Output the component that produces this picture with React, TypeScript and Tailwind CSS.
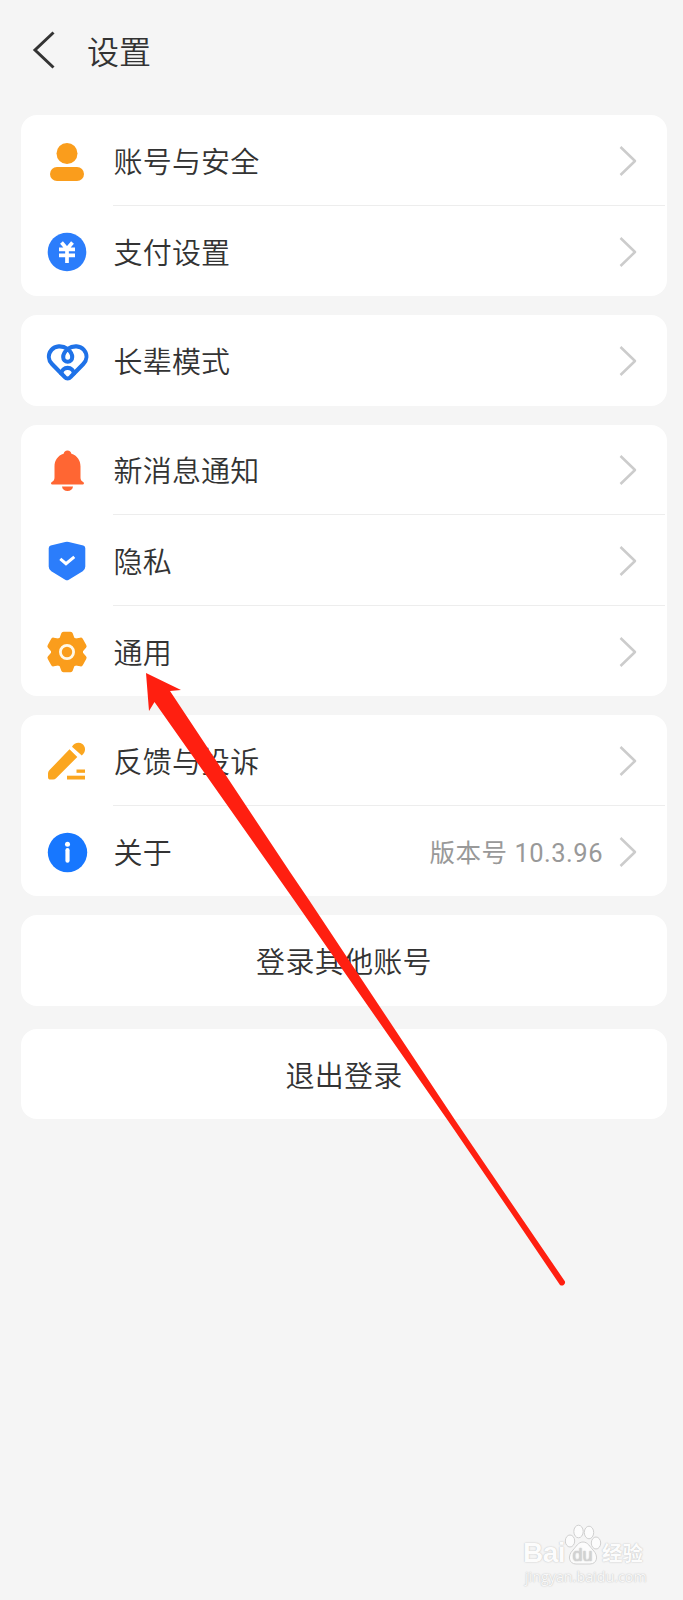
import type { ReactNode } from "react";

const UserIcon = () => (
  <svg width="44" height="44" viewBox="0 0 44 44" fill="#fa9d1c">
    <circle cx="22" cy="14.5" r="10.5" />
    <rect x="5" y="28" width="34" height="14" rx="7" />
  </svg>
);

const PayIcon = () => (
  <svg width="44" height="44" viewBox="0 0 44 44">
    <circle cx="22" cy="22" r="19.3" fill="#2b7dfb" />
    <path
      d="M16.5 12.5l5.5 6.5 5.5-6.5M14 19.3h16M14 25.3h16M22 19v14"
      fill="none"
      stroke="#fff"
      strokeWidth="3.7"
    />
  </svg>
);

const HeartIcon = () => (
  <svg
    width="46"
    height="44"
    viewBox="0.5 -0.5 46 44"
    fill="none"
    stroke="#1f72e8"
    strokeWidth="4.1"
    strokeLinecap="round"
    strokeLinejoin="round"
  >
    <path d="M23 9.5C17.5 5.5 10.5 6.2 7 10.3 3.2 14.800 3.700 20.500 7.500 24.500L20 37.300c2 2.200 4.300 2.200 6.300 0L38.800 24.500c3.800-4 4.300-9.700.5-14.200C35.800 6.200 28.800 5.500 23.300 9.500c-2.300 1.900-4.600 5-4.600 8 0 2.700 1.900 4.700 4.500 4.700s4.500-2 4.500-4.700c0-3-2.300-6.100-4.700-8z" />
    <path d="M16.800 34c.3-3.400 2.900-5.600 6.300-5.600s6 2.200 6.300 5.600" />
  </svg>
);

const BellIcon = () => (
  <svg width="44" height="44" viewBox="0 0 44 44" fill="#ff6633">
    <path d="M22.500 1.500c2.200 0 3.600 1.300 3.900 3.300 5.700 1.700 9.100 6.500 9.100 12.700v11c0 2 .6 3.300 2.300 4.200 1.800 1 1.400 2.800-.5 2.800H7.700c-1.900 0-2.300-1.800-.5-2.800 1.700-.9 2.300-2.200 2.300-4.200v-11c0-6.200 3.400-11 9.100-12.700.3-2 1.700-3.300 3.900-3.300z" />
    <path d="M17 37.500h11c-.3 2.800-2.500 4.500-5.500 4.500S17.300 40.300 17 37.500z" />
  </svg>
);

const ShieldIcon = () => (
  <svg width="44" height="44" viewBox="0 0 44 44">
    <path
      d="M20.200 2.900q1.800-.5 3.600 0L38.300 6.500q2 .6 2 2.700v18.300q0 3.200-2.600 4.800l-13.900 8.500q-1.800 1-3.600 0L6.300 32.300q-2.600-1.600-2.600-4.800V9.200q0-2.100 2-2.700z"
      fill="#2b7dfb"
    />
    <path d="M15.300 19.800l5.700 4.900 8.300-6.900" fill="none" stroke="#fff" strokeWidth="3" />
  </svg>
);

const TEETH = [0, 60, 120, 180, 240, 300];

const GearIcon = () => (
  <svg width="44" height="44" viewBox="0 0 44 44">
    <g fill="#fa9d1c">
      <circle cx="22" cy="22" r="16" />
      {TEETH.map((deg) => (
        <path
          key={deg}
          d="M18.500 1.800h7q1.800 0 2.300 1.600l1.500 4.400 3 3H11.700l3-3 1.500-4.400q.5-1.600 2.300-1.600z"
          transform={`rotate(${deg} 22 22)`}
        />
      ))}
    </g>
    <circle cx="22" cy="22" r="6.6" fill="none" stroke="#fff8e8" strokeWidth="2.8" />
  </svg>
);

const PencilIcon = () => (
  <svg width="44" height="44" viewBox="0 0 44 44" fill="#fba61f">
    <path d="M24.500 10.200l7.800 7.800-21.200 21.200q-1.300 1.300-3 1.300H5.600q-2.600 0-2.600-2.600v-3.500q0-1.800 1.300-3.100z" />
    <path d="M27 7.700c2-3.800 6.900-5.300 10.400-2.700 3.400 2.600 3.800 7.900-.6 11.500z" />
    <rect x="31.5" y="30.5" width="8.5" height="3.3" />
    <rect x="22" y="36.7" width="18" height="3.8" />
  </svg>
);

const InfoIcon = () => (
  <svg width="44" height="44" viewBox="0 0 44 44">
    <circle cx="22.5" cy="22.5" r="19.7" fill="#1777ff" />
    <circle cx="22.5" cy="14.2" r="2.5" fill="#fff" />
    <path d="M22.5 20.2v10.5" stroke="#fff" strokeWidth="4.2" strokeLinecap="round" />
  </svg>
);

const Chevron = () => (
  <svg width="20" height="32" viewBox="0 0 20 32" fill="none">
    <path d="M2.5 2L17 16 2.5 30" stroke="#cccccc" strokeWidth="2.5" strokeLinejoin="round" />
  </svg>
);

type Item = { icon: ReactNode; label: string; value?: string };

const GROUPS: Item[][] = [
  [
    { icon: <UserIcon />, label: "账号与安全" },
    { icon: <PayIcon />, label: "支付设置" },
  ],
  [{ icon: <HeartIcon />, label: "长辈模式" }],
  [
    { icon: <BellIcon />, label: "新消息通知" },
    { icon: <ShieldIcon />, label: "隐私" },
    { icon: <GearIcon />, label: "通用" },
  ],
  [
    { icon: <PencilIcon />, label: "反馈与投诉" },
    { icon: <InfoIcon />, label: "关于", value: "版本号 10.3.96" },
  ],
];

function Row({ icon, label, value, divider }: Item & { divider: boolean }) {
  return (
    <div className="flex h-[90.5px] items-center pl-6">
      <div className="w-[68px] shrink-0 pt-0.5">{icon}</div>
      <div
        className={
          divider
            ? "mr-[2px] flex h-full flex-1 items-center border-b border-[#ededed] pt-0.5 pr-[27px]"
            : "flex h-full flex-1 items-center pt-0.5 pr-[29px]"
        }
      >
        <span className="-mt-px flex-1 pl-[0.5px] text-[29px] tracking-[0.2px]">{label}</span>
        {value && (
          <span className="mr-[15px] pt-0.5 font-[Roboto,'Noto_Sans_CJK_SC',sans-serif] text-[25.5px] font-normal tracking-[0.5px] text-[#999999]">
            {value}
          </span>
        )}
        <Chevron />
      </div>
    </div>
  );
}

// Red pointer that runs from the lower right up to the "通用" row
function Pointer() {
  return (
    <svg className="pointer-events-none absolute top-0 left-0" width="683" height="1600" viewBox="0 0 683 1600">
      <path
        d="M146 673L181 690 170 691 290 872 309 900 455 1120 510 1201 565 1281.5A3.3 3.3 0 0 1 560 1285L503 1201 447.5 1120 294 900 154.5 702 149 711z"
        fill="#ff1f10"
      />
    </svg>
  );
}

function Watermark() {
  return (
    <div className="absolute top-[1524px] left-[523px] w-[130px] text-[#fcfcfc] [text-shadow:0_0_1px_#c4c4c4,0_0_2px_#d4d4d4]">
      <div className="flex h-[43px] items-end">
        <span className="w-[41px] font-['Liberation_Sans'] text-[28px] leading-[29px] font-bold tracking-[-0.5px]">Bai</span>
        <svg className="mb-px shrink-0" width="38" height="43" viewBox="0 0 38 43" fill="#fcfcfc" stroke="#d0d0d0">
          <ellipse cx="6" cy="18" rx="4.7" ry="6" />
          <ellipse cx="14.5" cy="8.5" rx="4.7" ry="6.3" />
          <ellipse cx="25" cy="9.5" rx="4.7" ry="6.3" />
          <ellipse cx="32" cy="20" rx="4.7" ry="6" />
          <path d="M19 19c5 0 7 5 10 8 6 6 4 14-3 14H12c-7 0-9-8-3-14 3-3 5-8 10-8z" />
          <text x="8.5" y="38" fontSize="18" fontFamily="Liberation Sans" fill="#d2d2d2" stroke="none">
            du
          </text>
        </svg>
        <span className="text-[20.5px] leading-[29px] font-bold whitespace-nowrap">经验</span>
      </div>
      <div className="pt-0.5 pl-0.5 font-['Open_Sans'] text-[14.3px] leading-[15px] font-normal text-[#f8f8f8]">
        jingyan.baidu.com
      </div>
    </div>
  );
}

export default function App() {
  return (
    <div className="relative h-[1600px] w-[683px] overflow-hidden bg-[#f5f5f5] font-['Noto_Sans_CJK_SC',sans-serif] font-[350] text-[#333333]">
      <header className="flex h-[115px] items-start pt-[30px] pl-8">
        <svg width="24" height="40" viewBox="0 0 24 40" fill="none">
          <path d="M21.5 2.5L3 20l18.5 17.5" stroke="#333" strokeWidth="3" />
        </svg>
        <h1 className="ml-[31px] text-[32px] leading-[40px] font-[350]">设置</h1>
      </header>

      <main className="ml-[21px] w-[646px]">
        <div className="flex flex-col gap-[19px]">
          {GROUPS.map((items) => (
            <section key={items[0].label} className="overflow-hidden rounded-2xl bg-white">
              {items.map((item, i) => (
                <Row key={item.label} {...item} divider={i < items.length - 1} />
              ))}
            </section>
          ))}
          <button className="h-[91px] rounded-2xl bg-white pt-px text-[29px] tracking-[0.3px]">登录其他账号</button>
        </div>
        <button className="mt-[23px] h-[90px] w-full rounded-2xl bg-white pt-px text-[29px] tracking-[0.3px]">
          退出登录
        </button>
      </main>

      <Pointer />
      <Watermark />
    </div>
  );
}
